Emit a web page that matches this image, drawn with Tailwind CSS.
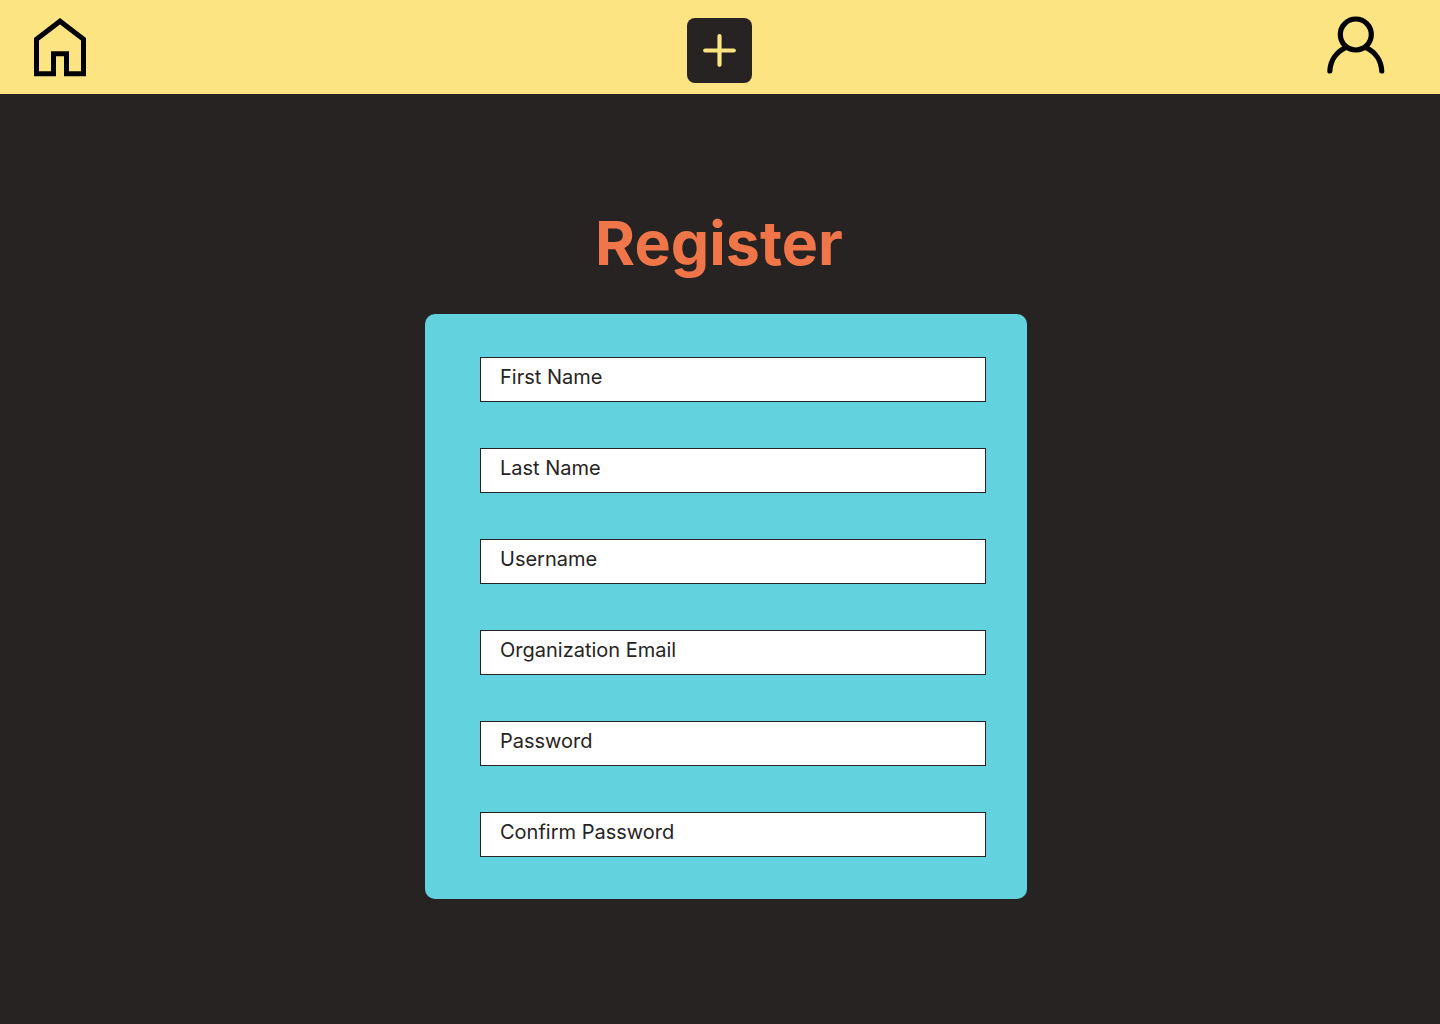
<!DOCTYPE html>
<html lang="en">
<head>
<meta charset="utf-8">
<meta name="viewport" content="width=device-width, initial-scale=1">
<title>Register</title>
<script src="https://cdn.jsdelivr.net/npm/@tailwindcss/browser@4"></script>
</head>
<body class="min-h-screen bg-[#272323] font-[Inter,sans-serif] text-[#272323]">
<header class="grid grid-cols-[1fr_auto_1fr] items-start bg-[#fbe481] pt-4 pr-0.5 pb-[11px]">
  <a href="#" aria-label="Home" class="ml-[30px] justify-self-start">
    <svg class="block h-16 w-[60px]" viewBox="0 0 60 64" fill="none" stroke="#000" stroke-width="5"><path d="M6.500 57.700V23.200L30 5.200L53.500 23.200V57.700H36.500V37.700H23.500V57.700Z"/></svg>
  </a>
  <button type="button" aria-label="Add" class="mt-0.5 flex size-[65px] items-center justify-center rounded-lg bg-[#272323]">
    <svg class="block size-[33px]" viewBox="0 0 33 33" fill="none" stroke="#fbe481" stroke-width="4.200" stroke-linecap="round"><path d="M16.500 2.200V30.800M2.200 16.500H30.800"/></svg>
  </button>
  <a href="#" aria-label="Profile" class="mr-[52px] justify-self-end">
    <svg class="block h-[58px] w-[60px]" viewBox="0 0 60 58" fill="none" stroke="#000" stroke-width="5.200" stroke-linecap="round"><circle cx="29.800" cy="18.500" r="15.500"/><path d="M3.900 55C4.300 44.500 10.500 36 19.500 31.600M55.700 55C55.300 44.500 49.100 36 40.100 31.600"/></svg>
  </a>
</header>
<main class="flex flex-col items-center pt-[113px] pb-12">
  <h1 class="pr-0.5 text-[61px] leading-[72px] font-bold text-[#f07649]">Register</h1>
  <div class="mt-[35px] w-full max-w-[614px] pl-3">
    <form class="flex flex-col gap-[46px] rounded-[10px] bg-[#62d2df] pt-[43px] pr-[41px] pb-[42px] pl-[55px]">
      <input type="text" aria-label="First Name" placeholder="First Name" class="h-[45px] w-full border border-[#272323] bg-white px-[19px] pb-[5px] text-xl placeholder:text-[#272323]">
      <input type="text" aria-label="Last Name" placeholder="Last Name" class="h-[45px] w-full border border-[#272323] bg-white px-[19px] pb-[5px] text-xl placeholder:text-[#272323]">
      <input type="text" aria-label="Username" placeholder="Username" class="h-[45px] w-full border border-[#272323] bg-white px-[19px] pb-[5px] text-xl placeholder:text-[#272323]">
      <input type="email" aria-label="Organization Email" placeholder="Organization Email" class="h-[45px] w-full border border-[#272323] bg-white px-[19px] pb-[5px] text-xl placeholder:text-[#272323]">
      <input type="password" aria-label="Password" placeholder="Password" class="h-[45px] w-full border border-[#272323] bg-white px-[19px] pb-[5px] text-xl placeholder:text-[#272323]">
      <input type="password" aria-label="Confirm Password" placeholder="Confirm Password" class="h-[45px] w-full border border-[#272323] bg-white px-[19px] pb-[5px] text-xl placeholder:text-[#272323]">
    </form>
  </div>
</main>
</body>
</html>
